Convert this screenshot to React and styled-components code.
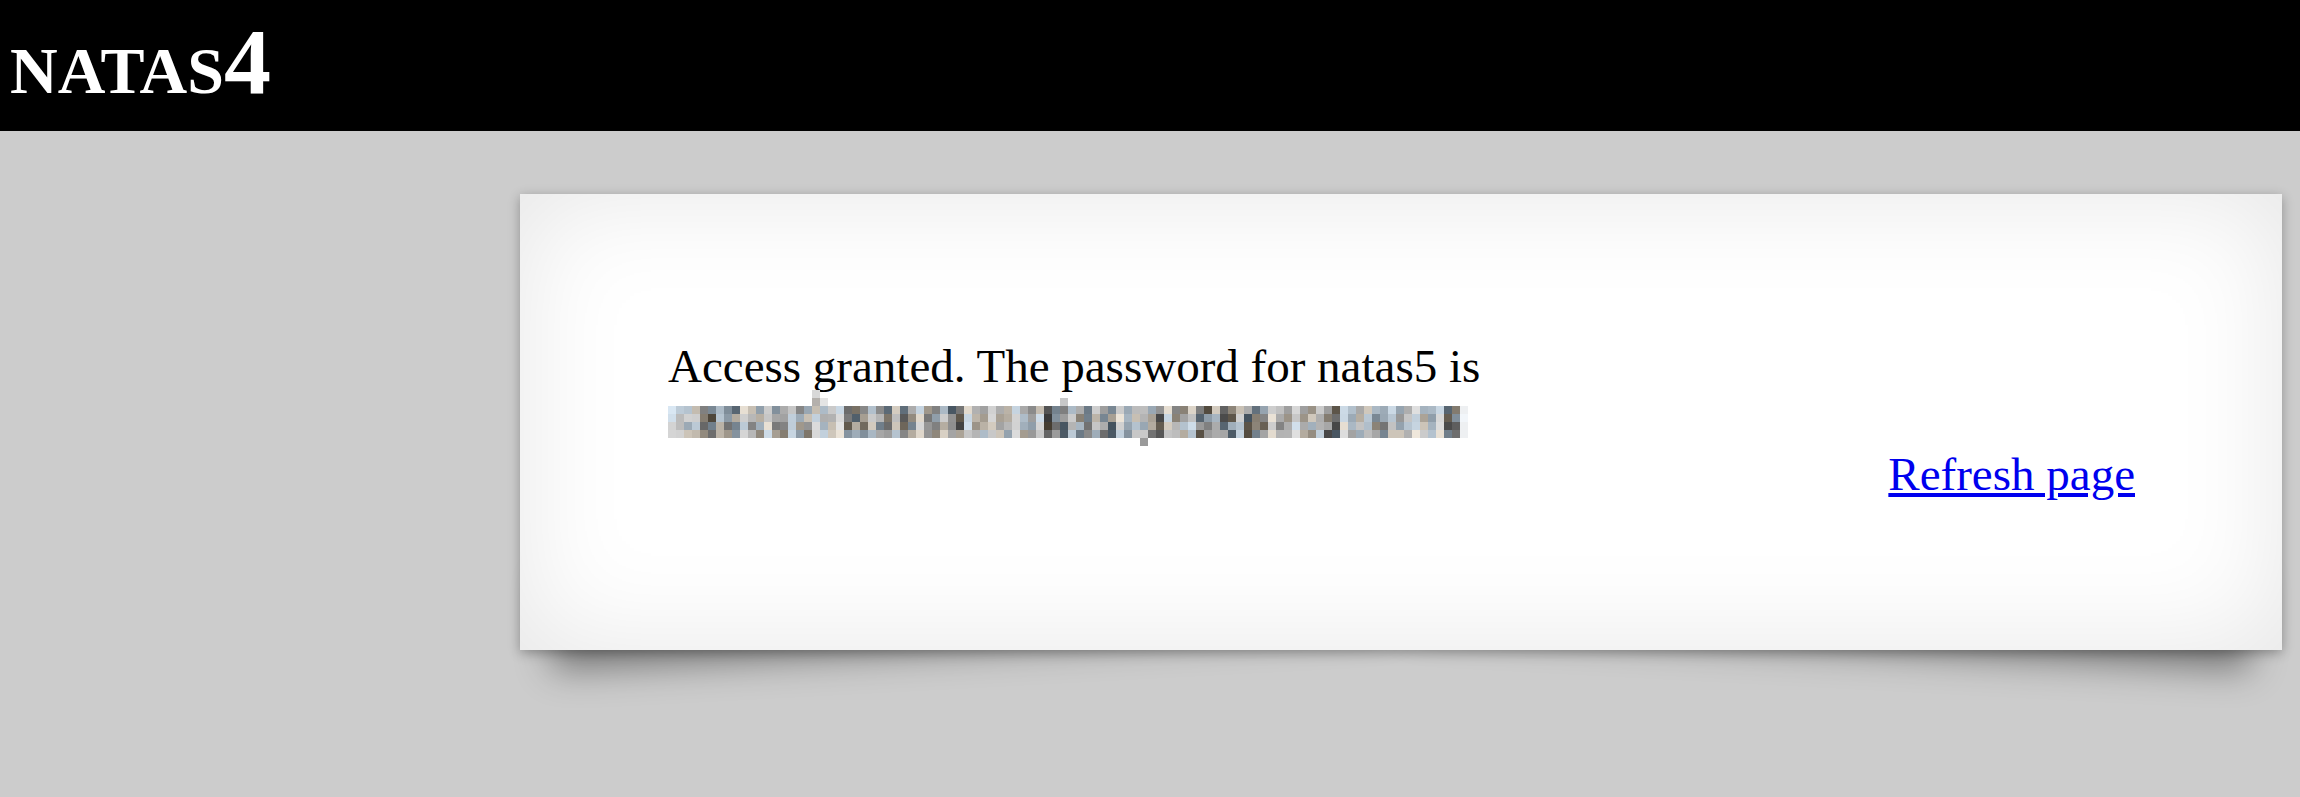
import React from 'react'
import styled, { createGlobalStyle } from 'styled-components'

const GlobalStyle = createGlobalStyle`
  html, body {
    margin: 0;
    background: #ccc;
  }
  body {
    font-family: "Liberation Serif", "Times New Roman", serif;
  }
`

const Page = styled.div`
  min-height: 100vh;
  background: #ccc;
  overflow: hidden;
`

const Title = styled.h1`
  box-sizing: border-box;
  height: 131px;
  margin: 0;
  padding: 7px 10px 0;
  background: #000;
  color: #fff;
  font-size: 94px;
  font-weight: bold;
  font-variant: small-caps;
  line-height: normal;
`

// holds the card and the two lifted-corner shadows behind it
const Frame = styled.div`
  position: relative;
  width: 1762px;
  height: 456px;
  margin: 63px 0 0 520px;
`

// painted first, so the card (positioned, later in the DOM) covers it
const LiftShadow = styled.div`
  position: absolute;
  bottom: 42px;
  ${p => (p.$side === 'right' ? 'right: 28px;' : 'left: 28px;')}
  width: 840px;
  height: 91px;
  box-shadow: 0 40px 36px rgba(0, 0, 0, 0.42);
  transform: rotate(${p => (p.$side === 'right' ? '3deg' : '-3deg')});
`

const Content = styled.div`
  position: relative;
  box-sizing: border-box;
  height: 456px;
  padding: 145px 147px 0 148px;
  background: #fff;
  font-size: 47px;
  line-height: 54px;
  box-shadow: 0 3px 11px rgba(0, 0, 0, 0.3), inset 0 0 110px rgba(0, 0, 0, 0.1);
`

const Line = styled.div`
  height: 54px;
`

const Mosaic = styled.svg`
  display: block;
  overflow: visible;
`

const ViewSource = styled.div`
  text-align: right;
`

const Link = styled.a`
  color: #0000ee;
  text-decoration: underline;
`

// seeded so the blurred password looks the same every run
function rng(seed) {
  let a = seed
  return () => {
    a |= 0
    a = (a + 0x6d2b79f5) | 0
    let t = Math.imul(a ^ (a >>> 15), 1 | a)
    t = (t + Math.imul(t ^ (t >>> 7), 61 | t)) ^ t
    return ((t ^ (t >>> 14)) >>> 0) / 4294967296
  }
}

function cellColor(v, tint) {
  let c = [v, v, v]
  if (tint < 0.3) c = [v - 12, v + 2, v + 14]
  else if (tint < 0.55) c = [v + 12, v + 4, v - 8]
  return `rgb(${c.map(x => Math.max(0, Math.min(255, Math.round(x)))).join(',')})`
}

const CELL = 8
const COLS = 99
const ROW_TOP = 13
const CHAR_W = 25

function PasswordBlur() {
  const r = rng(45)
  const ink = Array.from({ length: 33 }, () => 0.4 + r() * 0.6)
  const cells = []
  for (let col = 0; col < COLS; col++) {
    const x = col * CELL + CELL / 2
    const ch = Math.floor(x / CHAR_W)
    const pos = (x % CHAR_W) / CHAR_W
    const edge = pos < 0.18 || pos > 0.86
    for (let row = 0; row < 4; row++) {
      let density = ink[ch] * (edge ? 0.45 : 1) * (0.5 + r() * 0.7)
      const v = 245 - density * 160
      cells.push({ x: col * CELL, y: ROW_TOP + row * CELL, fill: cellColor(v, r()) })
    }
  }
  // ascenders and descenders poking out of the block
  cells.push({ x: 144, y: ROW_TOP - 16, fill: '#d8d8d8' })
  cells.push({ x: 144, y: ROW_TOP - 8, fill: '#b4b0ac' })
  cells.push({ x: 152, y: ROW_TOP - 8, fill: '#e4e4e4' })
  cells.push({ x: 392, y: ROW_TOP - 8, fill: '#c8c8c8' })
  cells.push({ x: 472, y: ROW_TOP + 32, fill: '#9a9a9a' })
  for (let row = 0; row < 4; row++) {
    cells.push({ x: COLS * CELL, y: ROW_TOP + row * CELL, fill: row === 1 ? '#f2f6fa' : '#eef0f2' })
  }
  return (
    <Mosaic width={(COLS + 1) * CELL} height="54" aria-hidden="true">
      {cells.map((c, i) => (
        <rect key={i} x={c.x} y={c.y} width={CELL} height={CELL} fill={c.fill} />
      ))}
    </Mosaic>
  )
}

export default function App() {
  return (
    <Page>
      <GlobalStyle />
      <Title>natas4</Title>
      <Frame>
        <LiftShadow $side="left" />
        <LiftShadow $side="right" />
        <Content>
          <Line>Access granted. The password for natas5 is</Line>
          <Line>
            <PasswordBlur />
          </Line>
          <ViewSource>
            <Link href="index.php">Refresh page</Link>
          </ViewSource>
        </Content>
      </Frame>
    </Page>
  )
}
